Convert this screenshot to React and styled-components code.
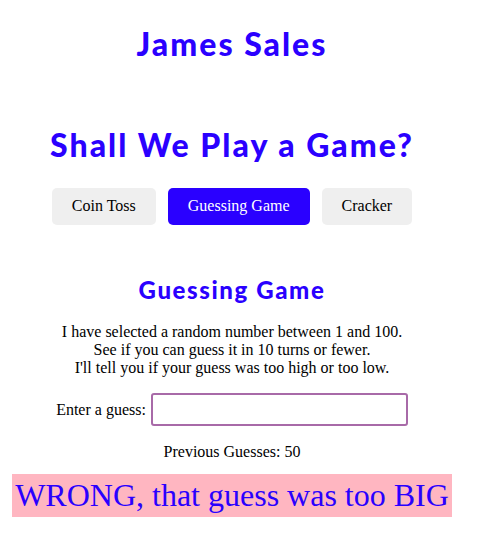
import styled, { createGlobalStyle } from "styled-components";
import { useState } from "react";

const GlobalStyle = createGlobalStyle`
  body {
    margin: 8px;
    background: #fff;
    font-family: "Liberation Serif", "Times New Roman", serif;
    font-size: 16px;
    color: #000;
  }
`;

const Page = styled.div`
  width: 448px;
  display: flex;
  flex-direction: column;
  align-items: center;
  text-align: center;
`;

const Title = styled.h1`
  font-family: "Lato", "Open Sans", sans-serif;
  font-weight: 900;
  color: #2a00ff;
  font-size: ${(p) => p.$size}px;
  letter-spacing: ${(p) => p.$spacing}px;
  margin: ${(p) => p.$margin};
  line-height: 1.15;
`;

const Nav = styled.div`
  display: flex;
  gap: 12px;
  justify-content: center;
  margin-top: 24px;
`;

const NavButton = styled.button`
  font-family: "Liberation Serif", "Times New Roman", serif;
  font-size: 16px;
  height: 37px;
  padding: 0 20px;
  border: none;
  border-radius: 5px;
  background: ${(p) => (p.$active ? "#2a00ff" : "#efefef")};
  color: ${(p) => (p.$active ? "#fff" : "#000")};
  cursor: pointer;
`;

const Intro = styled.p`
  margin: 20px 0 0;
  line-height: 18px;
`;

const GuessRow = styled.label`
  display: flex;
  align-items: center;
  gap: 5px;
  margin-top: 16px;
`;

const GuessInput = styled.input`
  width: 257px;
  height: 33px;
  box-sizing: border-box;
  border: 2px solid #a86aa8;
  border-radius: 3px;
  outline: none;
  font-size: 16px;
`;

const Previous = styled.p`
  margin: 17px 0 0;
  line-height: 18px;
`;

const Verdict = styled.div`
  margin-top: 13px;
  background: #ffb6c1;
  color: #2a00ff;
  font-size: 32px;
  line-height: 43px;
  padding: 0 3px;
`;

export default function App() {
  const [game, setGame] = useState("guess");
  const [guess, setGuess] = useState("");

  return (
    <>
      <GlobalStyle />
      <Page>
        <Title $size={32} $spacing={2} $margin="18px 0 0">James Sales</Title>
        <Title $size={32} $spacing={2} $margin="64px 0 0">Shall We Play a Game?</Title>
        <Nav>
          <NavButton $active={game === "coin"} onClick={() => setGame("coin")}>Coin Toss</NavButton>
          <NavButton $active={game === "guess"} onClick={() => setGame("guess")}>Guessing Game</NavButton>
          <NavButton $active={game === "cracker"} onClick={() => setGame("cracker")}>Cracker</NavButton>
        </Nav>
        <Title $size={24} $spacing={1.6} $margin="51px 0 0">Guessing Game</Title>
        <Intro>
          I have selected a random number between 1 and 100.<br />
          See if you can guess it in 10 turns or fewer.<br />
          I'll tell you if your guess was too high or too low.
        </Intro>
        <GuessRow>
          Enter a guess:
          <GuessInput value={guess} onChange={(e) => setGuess(e.target.value)} />
        </GuessRow>
        <Previous>Previous Guesses: 50</Previous>
        <Verdict>WRONG, that guess was too BIG</Verdict>
      </Page>
    </>
  );
}
